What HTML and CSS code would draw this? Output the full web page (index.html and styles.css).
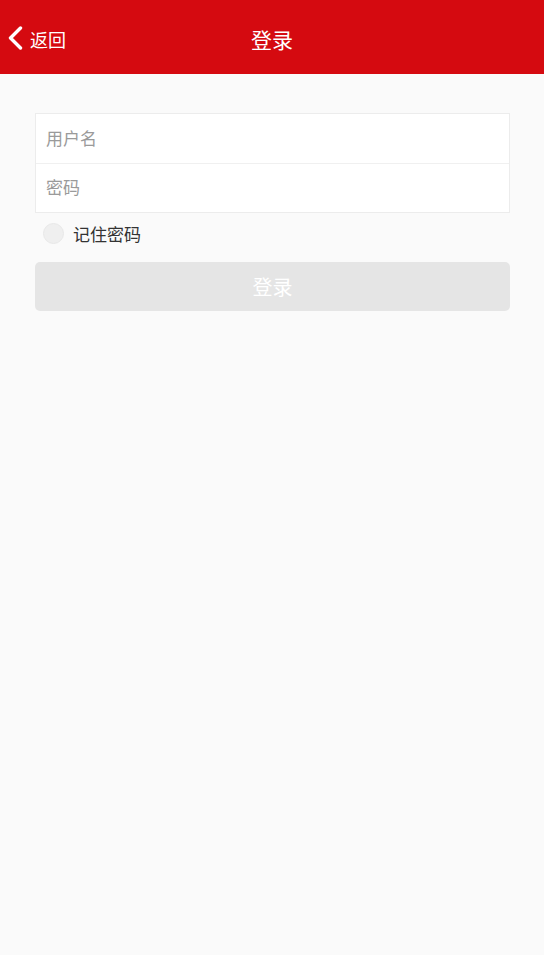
FILE: index.html
```html
<!DOCTYPE html>
<html lang="zh">
<head>
<meta charset="utf-8">
<link rel="stylesheet" href="styles.css">
</head>
<body>
<header class="topbar">
  <a class="back">
    <svg class="back-icon" width="17" height="24" viewBox="0 0 17 24"><path d="M13.5 2 L3.5 12 L13.5 22" fill="none" stroke="#fff" stroke-width="3.4" stroke-linecap="round" stroke-linejoin="round"/></svg>
    <span>返回</span>
  </a>
  <h1 class="title">登录</h1>
</header>
<main class="content">
  <div class="fields">
    <div class="field"><span class="placeholder">用户名</span></div>
    <div class="field"><span class="placeholder">密码</span></div>
  </div>
  <label class="remember"><span class="circle"></span><span class="remember-text">记住密码</span></label>
  <button class="submit">登录</button>
</main>
</body>
</html>
```
FILE: styles.css
```css
* { box-sizing: border-box; }
html, body { margin: 0; padding: 0; }
body {
  width: 544px;
  height: 955px;
  background: #fafafa;
  font-family: "Noto Sans CJK SC", "Noto Sans", sans-serif;
}
.topbar {
  position: relative;
  height: 74px;
  background: #d50a10;
  display: flex;
  align-items: center;
  justify-content: center;
}
.back {
  position: absolute;
  left: 7px;
  top: 0;
  height: 74px;
  display: flex;
  align-items: center;
  gap: 6px;
  color: #fff;
  font-size: 18px;
  padding-top: 3px;
}
.back-icon { display: block; margin-top: -1px; }
.title {
  margin: 3px 0 0;
  color: #fff;
  font-size: 21px;
  font-weight: normal;
}
.content {
  padding: 39px 34px 0 35px;
}
.fields {
  background: #fff;
  border: 1px solid #ececec;
}
.field {
  height: 49px;
  display: flex;
  align-items: center;
  padding-left: 10px;
  padding-bottom: 3px;
}
.field + .field { border-top: 1px solid #f0f0f0; }
.placeholder {
  color: #9a9a9a;
  font-size: 17px;
}
.remember {
  display: flex;
  align-items: center;
  height: 49px;
  padding-left: 8px;
  padding-bottom: 8px;
}
.circle {
  width: 21px;
  height: 21px;
  border-radius: 50%;
  background: #efefef;
  border: 1px solid #e8e8e8;
}
.remember-text {
  margin-left: 9px;
  font-size: 17px;
  color: #333;
}
.submit {
  display: block;
  width: 100%;
  height: 49px;
  border: none;
  border-radius: 5px;
  background: #e5e5e5;
  color: #fff;
  font-family: inherit;
  font-size: 20px;
}
```
